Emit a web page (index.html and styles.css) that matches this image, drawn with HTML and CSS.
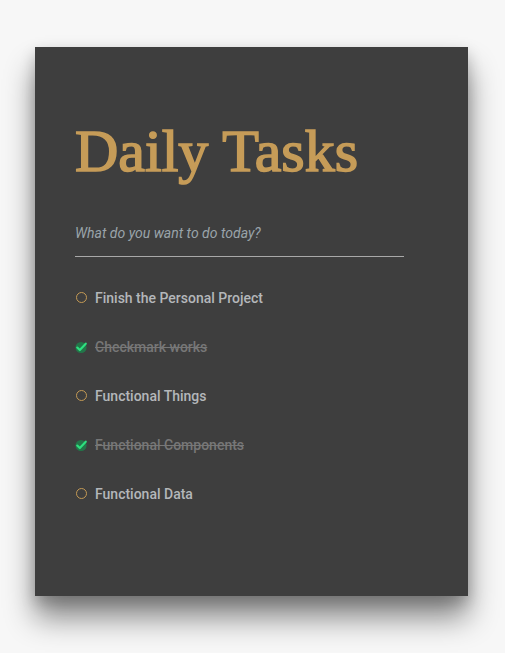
FILE: index.html
```html
<!DOCTYPE html>
<html>
<head>
<meta charset="utf-8">
<link rel="stylesheet" href="styles.css">
</head>
<body>
<main class="card">
  <h1 class="title">Daily Tasks</h1>
  <div class="field">
    <input class="input" type="text" placeholder="What do you want to do today?">
  </div>
  <ul class="tasks">
    <li class="task">
      <span class="mark open"></span>
      <span class="label">Finish the Personal Project</span>
    </li>
    <li class="task done">
      <span class="mark check"><svg viewBox="0 0 14 14" width="14" height="14"><circle cx="6.5" cy="7.5" r="6" fill="#237549"/><path d="M2.4 7.6 L5.2 10.3 L11.6 3.4" fill="none" stroke="#2ee07f" stroke-width="2.3" stroke-linecap="round" stroke-linejoin="round"/></svg></span>
      <span class="label">Checkmark works</span>
    </li>
    <li class="task">
      <span class="mark open"></span>
      <span class="label">Functional Things</span>
    </li>
    <li class="task done">
      <span class="mark check"><svg viewBox="0 0 14 14" width="14" height="14"><circle cx="6.5" cy="7.5" r="6" fill="#237549"/><path d="M2.4 7.6 L5.2 10.3 L11.6 3.4" fill="none" stroke="#2ee07f" stroke-width="2.3" stroke-linecap="round" stroke-linejoin="round"/></svg></span>
      <span class="label">Functional Components</span>
    </li>
    <li class="task">
      <span class="mark open"></span>
      <span class="label">Functional Data</span>
    </li>
  </ul>
</main>
</body>
</html>
```
FILE: styles.css
```css
html, body {
  margin: 0;
  padding: 0;
  background: #f7f7f7;
}
body {
  padding: 47px 0 0 35px;
  height: 653px;
  box-sizing: border-box;
  overflow: hidden;
}
.card {
  width: 433px;
  height: 549px;
  box-sizing: border-box;
  background: #3e3e3e;
  box-shadow: 0 22px 28px rgba(0, 0, 0, 0.45), 0 6px 14px rgba(0, 0, 0, 0.2);
  padding: 74px 64px 0 40px;
}
.title {
  margin: 0;
  font-family: "Liberation Serif", serif;
  font-weight: normal;
  font-size: 60px;
  line-height: 60px;
  color: #c69c58;
  white-space: nowrap;
  -webkit-text-stroke: 1.6px #c69c58;
}
.field {
  margin-top: 38px;
  border-bottom: 1px solid #a8a8a8;
  width: 329px;
}
.input {
  display: block;
  width: 100%;
  box-sizing: border-box;
  border: 0;
  outline: 0;
  background: transparent;
  padding: 6px 0 15px 0;
  font-family: Roboto, sans-serif;
  font-style: italic;
  font-weight: 400;
  font-size: 14px;
  color: #ddd;
}
.input::placeholder {
  color: #9aa4aa;
}
.tasks {
  list-style: none;
  margin: 22px 0 0 0;
  padding: 0;
}
.task {
  display: flex;
  align-items: center;
  height: 49px;
  gap: 7px;
  font-family: Roboto, sans-serif;
  font-weight: 500;
  font-size: 14px;
  color: #b4b7ba;
}
.task:first-child {
  margin-top: -6px;
}
.mark {
  width: 13px;
  height: 13px;
  flex: none;
  display: flex;
  align-items: center;
  justify-content: center;
}
.mark.open::before {
  content: "";
  box-sizing: border-box;
  width: 11px;
  height: 11px;
  border: 1.5px solid #c49a55;
  border-radius: 50%;
}
.mark svg {
  display: block;
}
.done .label {
  color: #777;
  text-decoration: line-through;
  text-decoration-color: #777;
}
```
